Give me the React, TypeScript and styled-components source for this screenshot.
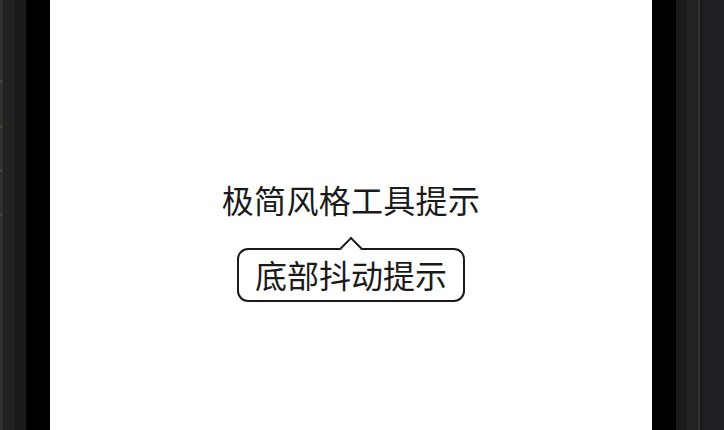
import React from 'react'
import styled, { createGlobalStyle } from 'styled-components'

const GlobalStyle = createGlobalStyle`
    html, body {
        margin: 0;
        padding: 0;
        background: #000;
    }
    body {
        font-family: "Noto Sans CJK SC", "Noto Sans", sans-serif;
    }
`

const Screen = styled.div`
    display: flex;
    width: 724px;
    height: 430px;
    overflow: hidden;
    background: #000;
`

const Strip = styled.div<{ $w: number; $bg: string }>`
    flex: 0 0 ${p => p.$w}px;
    height: 100%;
    background: ${p => p.$bg};
    position: relative;
`

const Mark = styled.span<{ $top: number; $color: string }>`
    position: absolute;
    left: 0;
    top: ${p => p.$top}px;
    width: 2px;
    height: 3px;
    background: ${p => p.$color};
`

const Panel = styled.div`
    flex: 0 0 602px;
    height: 100%;
    background: #fff;
    display: flex;
    flex-direction: column;
    align-items: center;
    padding-top: 177px;
    box-sizing: border-box;
    color: #1a1a1a;
`

const Title = styled.div`
    font-size: 32px;
    line-height: 44px;
    letter-spacing: 0.3px;
`

const Tip = styled.div`
    position: relative;
    margin-top: 27px;
    padding: 0 16px;
    height: 50px;
    line-height: 49px;
    font-size: 32px;
    border: 2px solid #1a1a1a;
    border-radius: 11px;
    background: #fff;

    &::before {
        content: '';
        position: absolute;
        left: 50%;
        top: -10px;
        width: 16px;
        height: 16px;
        margin-left: -8px;
        background: #fff;
        border-left: 2px solid #1a1a1a;
        border-top: 2px solid #1a1a1a;
        transform: rotate(45deg);
        box-sizing: border-box;
    }
`

const TipText = styled.span`
    position: relative;
`

function App() {
    return (
        <>
            <GlobalStyle />
            <Screen>
                <Strip $w={3} $bg="#303030">
                    <Mark $top={80} $color="#444" />
                    <Mark $top={125} $color="#3f4a2c" />
                    <Mark $top={169} $color="#3f4a2c" />
                    <Mark $top={213} $color="#3f4a2c" />
                </Strip>
                <Strip $w={12} $bg="#222222" />
                <Strip $w={11} $bg="#1b1b1b" />
                <Strip $w={24} $bg="#000000" />
                <Panel>
                    <Title>极简风格工具提示</Title>
                    <Tip>
                        <TipText>底部抖动提示</TipText>
                    </Tip>
                </Panel>
                <Strip $w={24} $bg="#000000" />
                <Strip $w={11} $bg="#1b1b1b" />
                <Strip $w={11} $bg="#222222" />
                <Strip $w={2} $bg="#343434" />
                <Strip $w={3} $bg="#1a1a1a" />
                <Strip $w={21} $bg="#1e2026" />
            </Screen>
        </>
    )
}

export default App
